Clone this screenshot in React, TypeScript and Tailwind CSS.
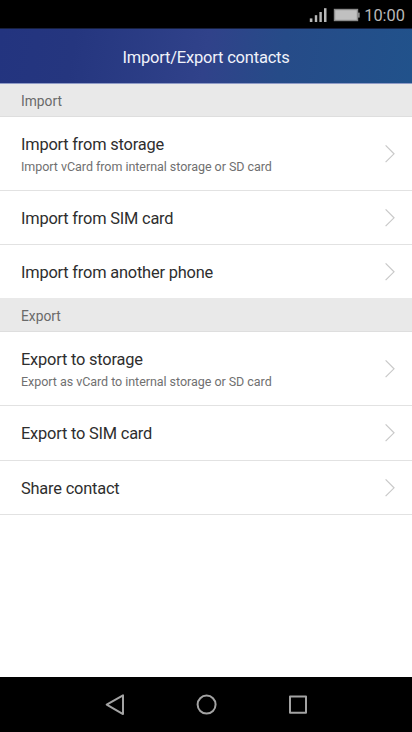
type Item = {
  title: string;
  summary?: string;
  height: string;
};

const importItems: Item[] = [
  {
    title: "Import from storage",
    summary: "Import vCard from internal storage or SD card",
    height: "h-[74px] border-b",
  },
  { title: "Import from SIM card", height: "h-[54px] border-b" },
  { title: "Import from another phone", height: "h-[53px]" },
];

const exportItems: Item[] = [
  {
    title: "Export to storage",
    summary: "Export as vCard to internal storage or SD card",
    height: "h-[74px] border-b",
  },
  { title: "Export to SIM card", height: "h-[55px] border-b" },
  { title: "Share contact", height: "h-[54px] border-b" },
];

function StatusBar() {
  return (
    <div className="flex h-7 shrink-0 items-center justify-end bg-black pr-[7px] text-[#b8b8b8]">
      <svg className="mt-px mr-1.5" width="18" height="16" viewBox="0 0 18 16" fill="currentColor">
        <rect x="0.8" y="11.4" width="2.6" height="3.6" />
        <rect x="5.8" y="8.2" width="2.4" height="6.8" />
        <rect x="10.4" y="5" width="2.4" height="10" />
        <rect x="15" y="1.2" width="2.5" height="13.8" />
      </svg>
      <svg className="mt-px mr-1" width="27" height="14" viewBox="0 0 27 14">
        <rect x="1.5" y="1.5" width="23" height="11" fill="#c0c0c0" stroke="#8c8c8c" strokeWidth="1.4" />
        <rect x="25.2" y="4.6" width="1.4" height="5" fill="#a8a8a8" />
      </svg>
      <span className="mt-[3px] text-[16.4px] leading-5">10:00</span>
    </div>
  );
}

function SectionHeader({ label, className }: { label: string; className: string }) {
  return (
    <div
      className={`flex shrink-0 items-center border-b border-[#dedede] bg-[#e9e9e9] px-[21px] text-[13.8px] leading-5 text-[#6a6a6a] ${className}`}
    >
      {label}
    </div>
  );
}

function Row({ item }: { item: Item }) {
  return (
    <div className={`flex shrink-0 items-center justify-between border-[#e2e2e2] pr-[17px] pl-[21px] ${item.height}`}>
      <div className={item.summary ? "pt-1" : "pt-0.5"}>
        <p className="text-[16.4px] leading-[22px] tracking-[-0.2px] text-[#2e2e2e]">{item.title}</p>
        {item.summary && (
          <p className="text-[12.5px] leading-[21px] tracking-[-0.04px] text-[#707070]">{item.summary}</p>
        )}
      </div>
      <svg width="10" height="18" viewBox="0 0 10 18" fill="none" stroke="#c9c9c9" strokeWidth="1.2">
        <path d="M0.6 0.4 9 8.8 0.6 17.2" />
      </svg>
    </div>
  );
}

function NavBar() {
  return (
    <div className="flex h-[55px] shrink-0 items-center bg-black px-[105px]">
      <svg width="202" height="24" viewBox="0 0 202 24" fill="none" stroke="#a3a3a3" strokeWidth="2">
        <path d="M18 2.3V21.1L1.7 11.6Z" strokeLinejoin="round" />
        <circle cx="101.6" cy="11.6" r="9" />
        <rect x="185" y="3.4" width="16" height="16.4" strokeLinejoin="round" />
      </svg>
    </div>
  );
}

export default function App() {
  return (
    <div className="flex h-[732px] w-[412px] flex-col overflow-hidden bg-white font-[Roboto,sans-serif]">
      <StatusBar />
      <header className="flex h-14 shrink-0 items-center justify-center border-t border-b border-t-[#17203f] border-b-[#8f9bc6] bg-linear-[100deg,#23347f_0%,#25367f_18%,#30428a_50%,#264b88_68%,#21528b_100%] pt-1 text-[16.5px] tracking-[-0.2px] text-[#f0f2fa]">
        <h1>Import/Export contacts</h1>
      </header>
      <main className="flex flex-1 flex-col">
        <SectionHeader label="Import" className="h-[33px] pt-0.5" />
        {importItems.map((item) => (
          <Row key={item.title} item={item} />
        ))}
        <SectionHeader label="Export" className="h-[34px] pt-[3px]" />
        {exportItems.map((item) => (
          <Row key={item.title} item={item} />
        ))}
      </main>
      <NavBar />
    </div>
  );
}
